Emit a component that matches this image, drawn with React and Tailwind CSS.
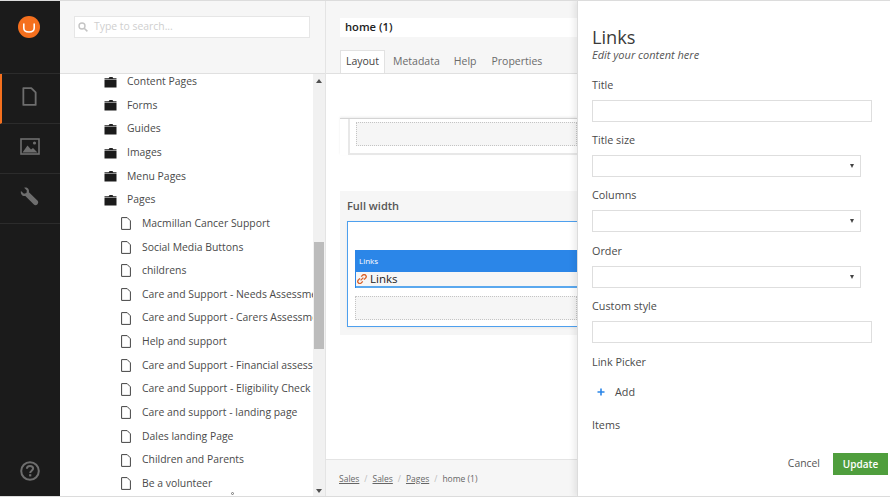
import React from 'react'

const folders = ['Content Pages', 'Forms', 'Guides', 'Images', 'Menu Pages', 'Pages']
const pages = [
  'Macmillan Cancer Support',
  'Social Media Buttons',
  'childrens',
  'Care and Support - Needs Assessment',
  'Care and Support - Carers Assessment',
  'Help and support',
  'Care and Support - Financial assessment',
  'Care and Support - Eligibility Check',
  'Care and support - landing page',
  'Dales landing Page',
  'Children and Parents',
  'Be a volunteer',
]

const FolderIcon = () => (
  <svg width="13" height="12" viewBox="0 0 13 12" className="shrink-0">
    <path d="M0.5 2.2 H4.6 L5.6 1 H8.5 L9.3 2.2 H12.5 V3.4 H0.5 Z" fill="#222" />
    <rect x="0.5" y="4" width="12" height="7.5" fill="#1b1b1b" />
  </svg>
)

const FileIcon = () => (
  <svg width="10" height="13" viewBox="0 0 10 13" className="shrink-0" fill="none">
    <path d="M0.6 0.6 H6.2 L9.4 3.8 V12.4 H0.6 Z" stroke="#444" strokeWidth="1" />
  </svg>
)

const SideItem = ({ active, children }) => (
  <div className={`h-[50px] flex items-center justify-center border-b border-[#2c2c2c] pb-[4px] ${active ? 'border-l-2 border-l-[#f5701e] pr-[3px]' : 'pr-[1px]'}`}>
    {children}
  </div>
)

const Sidebar = () => (
  <div className="w-[60px] shrink-0 bg-[#1b1b1b] flex flex-col">
    <div className="h-[74px] shrink-0 border-b border-[#2c2c2c] pt-[16px] pl-[18px]">
      <svg width="23" height="23" viewBox="0 0 23 23">
        <circle cx="11" cy="11" r="11" fill="#f5701e" />
        <path d="M5.8 7.5 V12 C5.8 15.2 8 16 11 16 C14 16 16.2 15.2 16.2 12 V7.5" stroke="#fff" strokeWidth="1.6" fill="none" />
      </svg>
    </div>
    <SideItem active>
      <svg width="15" height="19" viewBox="0 0 16 21" fill="none">
        <path d="M1.2 1.2 H10 L14.8 6 V19.8 H1.2 Z" stroke="#6e6e6e" strokeWidth="2" strokeLinejoin="round" />
      </svg>
    </SideItem>
    <SideItem>
      <svg width="20" height="17" viewBox="0 0 20 17" fill="none">
        <rect x="1" y="1" width="18" height="15" stroke="#6e6e6e" strokeWidth="1.6" />
        <circle cx="14.5" cy="5" r="1.6" fill="#6e6e6e" />
        <path d="M2.5 14.5 L7.5 7.5 L11 11.5 L13 10 L17.5 14.5 Z" fill="#6e6e6e" />
      </svg>
    </SideItem>
    <SideItem>
      <svg width="19" height="19" viewBox="0 0 20 20">
        <path d="M1 4.2 L4.2 7 L6.8 6.2 L7.2 3.6 L4.4 0.8 C7.5 0 10 2.2 9.4 5.6 L18.6 14.6 C19.6 15.8 19.2 17.4 18.2 18.4 C17 19.4 15.6 19.4 14.6 18.4 L5.6 9.4 C2.6 10 0.2 7.6 1 4.2 Z" fill="#6e6e6e" />
      </svg>
    </SideItem>
    <div className="mt-auto pb-[16px] flex justify-center">
      <svg width="20" height="20" viewBox="0 0 20 20" fill="none">
        <circle cx="10" cy="10" r="8.8" stroke="#6e6e6e" strokeWidth="2" />
        <path d="M6.9 7.8 C6.9 5.9 8.3 5 10 5 C11.8 5 13.1 6 13.1 7.6 C13.1 9.6 10.2 9.8 10.2 12" stroke="#6e6e6e" strokeWidth="2" />
        <rect x="9.1" y="13.2" width="2.2" height="2.2" fill="#6e6e6e" />
      </svg>
    </div>
  </div>
)

const TreePanel = () => (
  <div className="w-[266px] shrink-0 flex flex-col bg-white border-r border-[#e4e4e4]">
    <div className="h-[74px] shrink-0 bg-[#f6f6f6] border-b border-[#e0e0e0] pt-4 pl-[14px]">
      <div className="w-[236px] h-[22px] bg-white border border-[#e6e6e6] flex items-center pl-[3px] gap-[6px]">
        <svg width="10" height="10" viewBox="0 0 10 10" fill="none">
          <circle cx="4" cy="4" r="3" stroke="#c4c4c4" strokeWidth="1.4" />
          <path d="M6.2 6.2 L9.4 9.4" stroke="#c4c4c4" strokeWidth="1.5" />
        </svg>
        <span className="text-[10.4px] text-[#cfcfcf]">Type to search...</span>
      </div>
    </div>
    <div className="flex-1 flex min-h-0">
      <div className="w-[253px] overflow-hidden text-[10.4px] text-[#4a4a4a] whitespace-nowrap">
        <div className="-mt-[4px]">
          {folders.map((name) => (
            <div key={name} className="h-[23.65px] flex items-center pl-[44px] gap-[10px]">
              <FolderIcon />
              <span>{name}</span>
            </div>
          ))}
          {pages.map((name) => (
            <div key={name} className="h-[23.65px] flex items-center pl-[61px] gap-[11px]">
              <FileIcon />
              <span>{name}</span>
            </div>
          ))}
        </div>
      </div>
      <div className="w-[12px] bg-[#f1f1f1] flex flex-col items-center">
        <div className="h-[168px] shrink-0 pt-[5px]">
          <div className="w-0 h-0 border-x-[3px] border-x-transparent border-b-[4px] border-b-[#505050]" />
        </div>
        <div className="w-[10px] h-[107px] shrink-0 bg-[#bcbcbc]" />
        <div className="mt-auto pb-[4px]">
          <div className="w-0 h-0 border-x-[3px] border-x-transparent border-t-[4px] border-t-[#505050]" />
        </div>
      </div>
    </div>
  </div>
)

const Dropzone = ({ className }) => (
  <div className={`border border-dotted border-[#c4c4c4] bg-[#f6f6f6] ${className}`} />
)

const MainPanel = () => (
  <div className="w-[251px] shrink-0 flex flex-col overflow-hidden bg-white">
    <div className="h-[74px] shrink-0 bg-[#f6f6f6] border-b border-[#e0e0e0] pt-[18px] pl-[14px] flex flex-col">
      <div className="h-[20px] bg-white flex items-center pl-[5px] text-[11.2px] font-semibold text-[#222] -mr-[2px]">home (1)</div>
      <div className="mt-[13px] flex text-[10.5px] text-[#6b6b6b] h-[23px]">
        <div className="w-[45px] h-[23px] bg-white border border-b-0 border-[#e2e2e2] flex items-center justify-center text-[#444]">Layout</div>
        <div className="ml-[8px] h-[23px] flex items-center">Metadata</div>
        <div className="ml-[14px] h-[23px] flex items-center">Help</div>
        <div className="ml-[15px] h-[23px] flex items-center">Properties</div>
      </div>
    </div>
    <div className="flex-1 min-h-0 pl-[14px] flex flex-col">
      <div className="h-[44px] shrink-0" />
      <div className="h-[37px] shrink-0 border-t border-t-[#d4d4d4] shadow-[0_-1px_2px_rgba(0,0,0,0.08)] pl-[8px]">
        <div className="h-[36px] border-b-2 border-l-2 border-[#e8e8e8] pl-[6px] pt-[3px]">
          <Dropzone className="h-[24px]" />
        </div>
      </div>
      <div className="h-[144px] shrink-0 mt-[36px] bg-[#f6f6f6] pl-[7px] pt-[5px]">
        <div className="text-[11px] font-semibold text-[#555] leading-[20px] mb-[5px]">Full width</div>
        <div className="h-[106px] border-y border-l border-[#4ea0ee] bg-white pl-[7px] pt-[28px] shadow-[0_1px_3px_rgba(0,0,0,0.06)]">
          <div className="border-l border-[#2b86e8]">
            <div className="h-[22px] bg-[#2b86e8] flex items-center pl-[3px] text-[8px] text-white">Links</div>
            <div className="h-[16px] bg-[#f6f6f6] border-b-2 border-[#5aa8ee] flex items-center pl-[1px] gap-[3px] text-[11.5px] text-[#222]">
              <svg width="10" height="10" viewBox="0 0 10 10" fill="none">
                <path d="M4.2 2.6 L5.6 1.2 C6.4 0.4 7.8 0.4 8.6 1.2 C9.4 2 9.4 3.2 8.6 4 L7 5.6 M5.8 7.4 L4.2 9 C3.4 9.6 2 9.6 1.3 8.8 C0.6 8 0.6 6.8 1.3 6 L3 4.4 M3.6 6.4 L6.4 3.6" stroke="#d9622a" strokeWidth="1.3" />
              </svg>
              <span>Links</span>
            </div>
          </div>
          <Dropzone className="h-[24px] mt-[8px]" />
        </div>
      </div>
      <div className="flex-1" />
    </div>
    <div className="h-[38px] shrink-0 bg-[#f6f6f6] border-t border-[#e4e4e4] pl-[13px] flex items-center gap-[5px] text-[8.5px] text-[#666] pt-[1px]">
      <span className="underline">Sales</span>
      <span className="text-[#bbb]">/</span>
      <span className="underline">Sales</span>
      <span className="text-[#bbb]">/</span>
      <span className="underline">Pages</span>
      <span className="text-[#bbb]">/</span>
      <span>home (1)</span>
    </div>
  </div>
)

const Label = ({ children, className = '' }) => (
  <div className={`text-[10.8px] leading-[16px] text-[#4a4a4a] ${className}`}>{children}</div>
)

const TextField = () => (
  <div className="w-[280px] h-[22px] shrink-0 bg-white border border-[#dedede]" />
)

const SelectField = () => (
  <div className="w-[269px] h-[22px] shrink-0 bg-white border border-[#dedede] flex items-center justify-end pr-[6px]">
    <div className="w-0 h-0 border-x-[2.5px] border-x-transparent border-t-[4px] border-t-[#444]" />
  </div>
)

const Drawer = () => (
  <div className="w-[313px] shrink-0 bg-white border-l border-[#dcdcdc] shadow-[-3px_0_6px_rgba(0,0,0,0.08)] relative pl-[14px] flex flex-col">
    <div className="text-[18.2px] leading-[26px] text-[#3a3a3a] mt-[24px]">Links</div>
    <div className="text-[11px] leading-[16px] italic text-[#555] -mt-[3px]">Edit your content here</div>
    <Label className="mt-[14px] mb-[7px]">Title</Label>
    <TextField />
    <Label className="mt-[10px] mb-[7px]">Title size</Label>
    <SelectField />
    <Label className="mt-[10px] mb-[7px]">Columns</Label>
    <SelectField />
    <Label className="mt-[11px] mb-[7px]">Order</Label>
    <SelectField />
    <Label className="mt-[10px] mb-[7px]">Custom style</Label>
    <TextField />
    <Label className="mt-[11px]">Link Picker</Label>
    <div className="mt-[14px] h-[16px] flex items-center pl-[5px] gap-[10px] text-[10.8px] text-[#4a4a4a]">
      <svg width="8" height="8" viewBox="0 0 8 8"><path d="M4 0.5 V7.5 M0.5 4 H7.5" stroke="#2b86e8" strokeWidth="1.6" /></svg>
      <span>Add</span>
    </div>
    <Label className="mt-[17px]">Items</Label>
    <div className="mt-[20px] flex justify-end items-center pr-[2px]">
      <span className="text-[10.4px] text-[#555] mr-[13px]">Cancel</span>
      <div className="w-[55px] h-[22px] bg-[#4f9e3d] text-white text-[10px] font-semibold flex items-center justify-center">Update</div>
    </div>
  </div>
)

export default function App() {
  return (
    <div className="relative w-[890px] h-[497px] overflow-hidden flex bg-white [font-family:'Open_Sans',sans-serif]">
      <Sidebar />
      <TreePanel />
      <MainPanel />
      <Drawer />
      <div className="absolute left-[231px] top-[492px] w-[3px] h-[3px] rounded-full border border-[#777]" />
      <div className="absolute inset-0 border-y border-[#dcdcdc] pointer-events-none" />
    </div>
  )
}
